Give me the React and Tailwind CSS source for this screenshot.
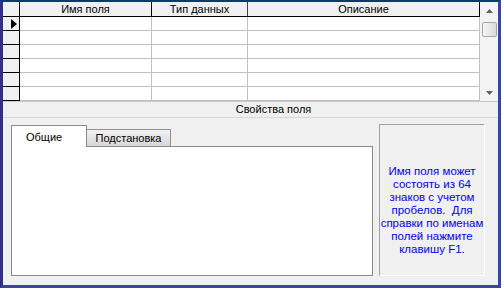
import React from 'react';

const rows = [0, 1, 2, 3, 4, 5];

export default function App() {
  return (
    <div className="w-[503px] h-[290px] bg-white font-['Liberation_Sans',Arial,sans-serif] text-[11px] leading-none text-black">
      <div className="w-[501px] h-[288px] bg-[#f0f0f0] border-l-[3px] border-l-[#2e2f8f] border-t-2 border-t-[#0d3b6e] border-r-[3px] border-r-[#3a44a6] border-b-[3px] border-b-[#3a44a6] flex flex-col">
        {/* Таблица полей */}
        <div className="flex h-[99px]">
          <div className="w-[477px] flex flex-col bg-white">
            <div className="flex h-[15px] bg-[#f0f0f0] border-b border-black">
              <div className="w-[17px] border-r border-black" />
              <div className="w-[132px] border-r border-black flex items-center justify-center">Имя поля</div>
              <div className="w-[96px] border-r border-[#404040] flex items-center justify-center">Тип данных</div>
              <div className="flex-1 border-r border-black flex items-center justify-center">Описание</div>
            </div>
            {rows.map((r) => (
              <div key={r} className="flex h-[14px]">
                <div className="w-[17px] bg-[#f0f0f0] border-r border-b border-black flex items-center pl-[8px]">
                  {r === 0 && (
                    <svg width="6" height="10" viewBox="0 0 6 10">
                      <path d="M0 0 L6 5 L0 10 Z" fill="#000" />
                    </svg>
                  )}
                </div>
                <div className="w-[132px] border-r border-b border-[#c0c0c0]" />
                <div className="w-[96px] border-r border-b border-[#c0c0c0]" />
                <div className="flex-1 border-r border-b border-[#c0c0c0]" />
              </div>
            ))}
          </div>
          {/* Полоса прокрутки */}
          <div className="flex-1 flex flex-col items-center bg-[#f4f4f4]">
            <div className="h-[17px] flex items-center justify-center">
              <svg width="7" height="4" viewBox="0 0 7 4">
                <path d="M3.5 0 L7 4 L0 4 Z" fill="#606060" />
              </svg>
            </div>
            <div className="w-[15px] h-[15px] mt-[3px] border border-[#a8a8a8] bg-[linear-gradient(to_right,#f6f6f6,#dadada)] rounded-[2px]" />
            <div className="flex-1" />
            <div className="h-[17px] flex items-center justify-center">
              <svg width="7" height="4" viewBox="0 0 7 4">
                <path d="M0 0 L7 0 L3.5 4 Z" fill="#606060" />
              </svg>
            </div>
          </div>
        </div>

        {/* Свойства поля */}
        <div className="h-[17px] border-t border-[#c8c8c8] border-b border-b-[#d8d8d8] flex items-center justify-center pl-[46px]">
          Свойства поля
        </div>

        <div className="flex pt-[6px] pl-[8px]">
          <div className="w-[362px] flex flex-col">
            <div className="flex items-end h-[22px]">
              <div className="w-[76px] h-[22px] bg-white border-l border-t border-r border-[#8a8a8a] flex pl-[14px] pt-[6px] relative -mb-px z-10">
                Общие
              </div>
              <div className="w-[84px] h-[17px] border-t border-r border-[#919191] bg-[linear-gradient(to_bottom,#f2f2f2,#d6d6d6)] flex items-center justify-center pt-[1px]">
                Подстановка
              </div>
            </div>
            <div className="h-[130px] bg-white border border-[#8a8a8a]" />
          </div>
          <div className="ml-[6px] w-[106px] h-[152px] border-l border-t border-[#a0a0a0] border-r border-b border-r-white border-b-white flex flex-col items-center pt-[40px] text-[#0000ff] text-center text-[11.5px] leading-[13px]">
            <div>Имя поля может</div>
            <div>состоять из 64</div>
            <div>знаков с учетом</div>
            <div>пробелов.&nbsp; Для</div>
            <div>справки по именам</div>
            <div>полей нажмите</div>
            <div>клавишу F1.</div>
          </div>
        </div>
      </div>
    </div>
  );
}
